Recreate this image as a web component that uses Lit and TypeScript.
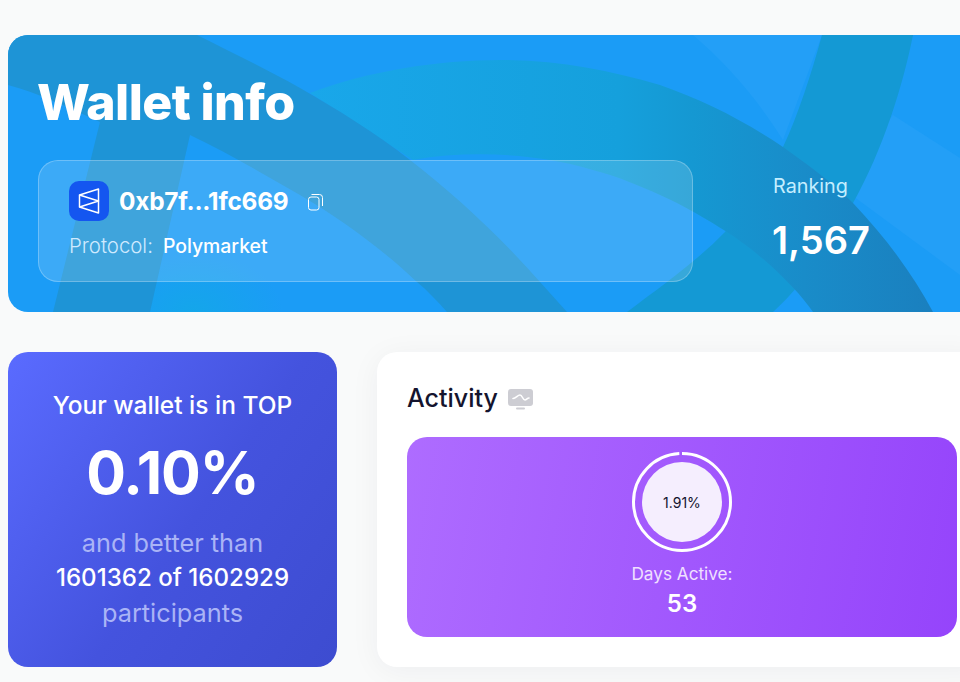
import { LitElement, css, html, svg } from "lit";
import { customElement } from "lit/decorators.js";

// curved bands behind the hero, drawn in hero coordinates
const heroBands = svg`
  <svg class="bands" viewBox="0 0 952 277" preserveAspectRatio="none" aria-hidden="true">
    <defs>
      <linearGradient id="arc" gradientUnits="userSpaceOnUse" x1="300" y1="0" x2="920" y2="0">
        <stop offset="0" stop-color="#19a7ea"/>
        <stop offset=".5" stop-color="#15a0dc"/>
        <stop offset=".62" stop-color="#1598d2"/>
        <stop offset=".8" stop-color="#198cc9"/>
        <stop offset="1" stop-color="#1a80bf"/>
      </linearGradient>
      <radialGradient id="glow">
        <stop offset="0" stop-color="#14a6ea"/>
        <stop offset="1" stop-color="#14a6ea" stop-opacity="0"/>
      </radialGradient>
    </defs>
    <ellipse cx="185" cy="277" rx="90" ry="60" fill="url(#glow)"/>
    <path d="M685 0 L814 0 L775 105 C750 65 720 30 685 0 Z" fill="#239ff7"/>
    <path d="M885 80 L952 123 V240 L830 150 Z" fill="#239ff7"/>
    <path d="M814 0 L905 0 C895 50 875 115 845 168 C825 205 800 245 765 277 L619 277 C655 250 690 225 717 197 C745 165 762 140 775 112 C790 80 803 40 814 0 Z" fill="#1499d4"/>
    <path d="M302 58 C360 36 430 25 492 25 C550 25 600 35 652 50 C695 65 735 85 775 112 C800 130 825 148 845 168 C880 205 905 240 925 277 L805 277 C790 255 755 220 719 197 C700 185 675 170 652 160 C630 150 610 142 592 137 C575 132 560 128 542 125 C500 118 450 117 405 125 Z" fill="url(#arc)"/>
    <path d="M0 0 L189 0 C225 18 258 34 292 53 C330 75 368 98 402 125 C450 162 495 205 532 247 L559 277 L439 277 C430 267 420 256 409 247 C375 215 335 185 292 160 C257 140 220 118 182 100 L142 277 L45 277 L92 87 C60 72 30 58 0 50 Z" fill="#1e94d6"/>
  </svg>
`;

@customElement("app-root")
export class AppRoot extends LitElement {
  static styles = css`
    :host {
      display: block;
      width: 960px;
      height: 682px;
      overflow: hidden;
      background: #f9fafa;
      font-family: "Inter", "Noto Sans", sans-serif;
      color: #fff;
    }

    .page {
      display: flex;
      flex-direction: column;
      gap: 40px;
      width: 1000px;
      padding: 35px 0 0 8px;
      box-sizing: border-box;
    }

    .hero {
      position: relative;
      width: 952px;
      height: 277px;
      border-radius: 20px 0 0 20px;
      overflow: hidden;
      background: #1b9cf6;
      display: flex;
      box-sizing: border-box;
      padding: 37px 0 0 30px;
    }

    .bands {
      position: absolute;
      inset: 0;
      width: 100%;
      height: 100%;
    }

    .hero-main,
    .ranking {
      position: relative;
    }

    .hero-main {
      width: 655px;
    }

    h1 {
      margin: 0;
      font-size: 50px;
      line-height: 60px;
      font-weight: 800;
      letter-spacing: -0.6px;
      margin-left: -1px;
    }

    .wallet {
      margin-top: 28px;
      height: 122px;
      box-sizing: border-box;
      padding: 20px 30px;
      border-radius: 20px;
      border: 1px solid rgba(255, 255, 255, 0.25);
      background: rgba(255, 255, 255, 0.15);
    }

    .address {
      display: flex;
      align-items: center;
      height: 40px;
    }

    .logo {
      width: 40px;
      height: 40px;
      border-radius: 10px;
      background: #1456f0;
      display: flex;
      align-items: center;
      justify-content: center;
      margin-right: 10px;
    }

    .hash {
      font-size: 24.4px;
      font-weight: 700;
      letter-spacing: -0.2px;
    }

    .copy {
      margin-left: 19px;
      margin-top: 2px;
      display: block;
    }

    .protocol {
      margin-top: 13px;
      font-size: 19.4px;
      line-height: 24px;
      display: flex;
      gap: 10px;
      font-weight: 500;
    }

    .protocol span {
      font-size: 20.4px;
      font-weight: 300;
      color: #cfeaff;
    }

    .ranking {
      margin-left: 80px;
      padding-top: 101px;
    }

    .ranking-label {
      font-size: 19.8px;
      line-height: 26px;
      color: #c4eeff;
      font-weight: 400;
    }

    .ranking-value {
      margin-top: 18px;
      font-size: 38px;
      line-height: 46px;
      font-weight: 600;
      margin-left: -1px;
    }

    .row {
      display: grid;
      grid-template-columns: 329px 610px;
      gap: 40px;
      height: 315px;
    }

    .top-card {
      border-radius: 20px;
      background: linear-gradient(125deg, #5a6bff 0%, #4453de 55%, #3d4cd0 100%);
      display: flex;
      flex-direction: column;
      align-items: center;
      text-align: center;
      padding-top: 36px;
      box-sizing: border-box;
    }

    .top-title {
      font-size: 24.5px;
      line-height: 34px;
      font-weight: 500;
    }

    .top-value {
      margin-top: 13px;
      font-size: 59px;
      line-height: 76px;
      font-weight: 700;
      letter-spacing: -1px;
    }

    .top-text {
      margin-top: 14px;
      font-size: 25.3px;
      line-height: 35px;
      color: #aab4f6;
    }

    .top-text b {
      display: block;
      font-size: 24.1px;
      color: #fff;
      font-weight: 500;
    }

    .activity {
      border-radius: 20px;
      background: #fff;
      box-shadow: 0 4px 30px rgba(20, 20, 60, 0.05);
      padding: 28px 30px 30px;
      box-sizing: border-box;
    }

    .activity-head {
      display: flex;
      align-items: center;
      gap: 10px;
      height: 35px;
      font-size: 25px;
      font-weight: 500;
      color: #14142e;
    }

    .activity-head svg {
      margin-top: 4px;
    }

    .activity-panel {
      margin-top: 22px;
      height: 200px;
      width: 550px;
      border-radius: 20px;
      background: linear-gradient(100deg, #ae6cff 0%, #9544fb 100%);
      display: flex;
      flex-direction: column;
      align-items: center;
      padding-top: 15px;
      box-sizing: border-box;
    }

    .donut {
      position: relative;
      width: 100px;
      height: 100px;
    }

    .donut svg {
      display: block;
    }

    .donut-label {
      position: absolute;
      inset: 10px;
      border-radius: 50%;
      background: #f5eefe;
      color: #14142e;
      font-size: 14px;
      display: flex;
      align-items: center;
      justify-content: center;
    }

    .days {
      margin-top: 11px;
      font-size: 17.2px;
      line-height: 22px;
      color: #f0e0ff;
    }

    .days-value {
      margin-top: 3px;
      font-size: 24px;
      line-height: 32px;
      font-weight: 600;
    }
  `;

  render() {
    return html`
      <div class="page">
        <section class="hero">
          ${heroBands}
          <div class="hero-main">
            <h1>Wallet info</h1>
            <div class="wallet">
              <div class="address">
                <div class="logo">
                  <svg width="22" height="26" viewBox="0 0 22 26" fill="none" stroke="#fff" stroke-width="1.5" stroke-linejoin="round">
                    <path d="M1.5 7 L20.5 1 V25 L1.5 19 Z"/>
                    <path d="M1.5 7 L20.5 13 L1.5 19"/>
                  </svg>
                </div>
                <span class="hash">0xb7f...1fc669</span>
                <svg class="copy" width="17" height="18" viewBox="0 0 17 18" fill="none" stroke="#fff" stroke-width="1">
                  <rect x="1.5" y="4" width="10.5" height="13" rx="2.5"/>
                  <path d="M4.5 1.5 H12.5 A3 3 0 0 1 15.5 4.5 V13"/>
                </svg>
              </div>
              <div class="protocol"><span>Protocol:</span> Polymarket</div>
            </div>
          </div>
          <div class="ranking">
            <div class="ranking-label">Ranking</div>
            <div class="ranking-value">1,567</div>
          </div>
        </section>

        <div class="row">
          <section class="top-card">
            <div class="top-title">Your wallet is in TOP</div>
            <div class="top-value">0.10%</div>
            <div class="top-text">and better than<b>1601362 of 1602929</b>participants</div>
          </section>

          <section class="activity">
            <div class="activity-head">
              Activity
              <svg width="25" height="21" viewBox="0 0 25 21">
                <rect x="0" y="0" width="25" height="17" rx="3" fill="#cdcdd3"/>
                <rect x="8" y="18.5" width="9" height="2" rx="1" fill="#cdcdd3"/>
                <path d="M5 9.5 C8 9.5 9.5 6 12 6 C14.5 6 14.5 11 17 11 C18.5 11 19 9 21 9" fill="none" stroke="#fff" stroke-width="1.6" stroke-linecap="round"/>
              </svg>
            </div>
            <div class="activity-panel">
              <div class="donut">
                <svg width="100" height="100" viewBox="0 0 100 100">
                  <circle cx="50" cy="50" r="48.5" fill="none" stroke="#fff" stroke-width="3"
                    stroke-dasharray="301.5 3.2" transform="rotate(-90 50 50)"/>
                </svg>
                <div class="donut-label">1.91%</div>
              </div>
              <div class="days">Days Active:</div>
              <div class="days-value">53</div>
            </div>
          </section>
        </div>
      </div>
    `;
  }
}
